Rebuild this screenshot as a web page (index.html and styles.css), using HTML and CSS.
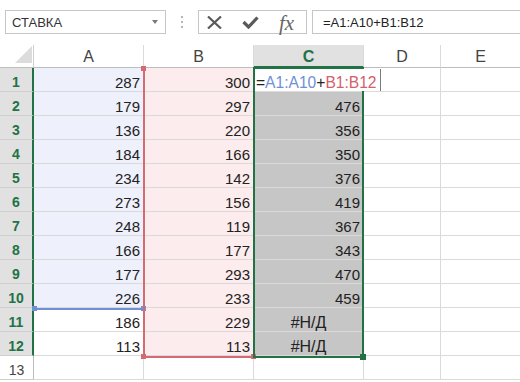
FILE: index.html
```html
<!DOCTYPE html>
<html>

<head>
    <meta charset="utf-8">
    <link rel="stylesheet" href="styles.css">
</head>

<body>
    <div class="formula-bar">
        <div class="name-box">СТАВКА<span class="drop"></span></div>
        <div class="grip"><i></i><i></i><i></i></div>
        <div class="fx-buttons">
            <svg class="ico" width="15" height="13" viewBox="0 0 15 13"><path d="M1 0.5 L14 12.5 M14 0.5 L1 12.5" stroke="#5a5a5a" stroke-width="2.2" fill="none"/></svg>
            <svg class="ico" width="17" height="13" viewBox="0 0 17 13"><path d="M1.5 6 L6.5 11 L15.5 1.5" stroke="#5a5a5a" stroke-width="3.2" fill="none"/></svg>
            <span class="fx">fx</span>
        </div>
        <div class="formula-input">=A1:A10+B1:B12</div>
    </div>

    <div class="sheet">
        <div class="grid">
            <div class="cell corner"></div>
            <div class="cell col-head">A</div>
            <div class="cell col-head">B</div>
            <div class="cell col-head sel">C</div>
            <div class="cell col-head">D</div>
            <div class="cell col-head">E</div>

            <div class="cell row-head sel">1</div>
            <div class="cell num blue">287</div>
            <div class="cell num pink">300</div>
            <div class="cell"></div>
            <div class="cell"></div>
            <div class="cell"></div>

            <div class="cell row-head sel">2</div>
            <div class="cell num blue">179</div>
            <div class="cell num pink">297</div>
            <div class="cell num grey">476</div>
            <div class="cell"></div>
            <div class="cell"></div>

            <div class="cell row-head sel">3</div>
            <div class="cell num blue">136</div>
            <div class="cell num pink">220</div>
            <div class="cell num grey">356</div>
            <div class="cell"></div>
            <div class="cell"></div>

            <div class="cell row-head sel">4</div>
            <div class="cell num blue">184</div>
            <div class="cell num pink">166</div>
            <div class="cell num grey">350</div>
            <div class="cell"></div>
            <div class="cell"></div>

            <div class="cell row-head sel">5</div>
            <div class="cell num blue">234</div>
            <div class="cell num pink">142</div>
            <div class="cell num grey">376</div>
            <div class="cell"></div>
            <div class="cell"></div>

            <div class="cell row-head sel">6</div>
            <div class="cell num blue">273</div>
            <div class="cell num pink">156</div>
            <div class="cell num grey">419</div>
            <div class="cell"></div>
            <div class="cell"></div>

            <div class="cell row-head sel">7</div>
            <div class="cell num blue">248</div>
            <div class="cell num pink">119</div>
            <div class="cell num grey">367</div>
            <div class="cell"></div>
            <div class="cell"></div>

            <div class="cell row-head sel">8</div>
            <div class="cell num blue">166</div>
            <div class="cell num pink">177</div>
            <div class="cell num grey">343</div>
            <div class="cell"></div>
            <div class="cell"></div>

            <div class="cell row-head sel">9</div>
            <div class="cell num blue">177</div>
            <div class="cell num pink">293</div>
            <div class="cell num grey">470</div>
            <div class="cell"></div>
            <div class="cell"></div>

            <div class="cell row-head sel">10</div>
            <div class="cell num blue">226</div>
            <div class="cell num pink">233</div>
            <div class="cell num grey">459</div>
            <div class="cell"></div>
            <div class="cell"></div>

            <div class="cell row-head sel">11</div>
            <div class="cell num">186</div>
            <div class="cell num pink">229</div>
            <div class="cell err grey">#Н/Д</div>
            <div class="cell"></div>
            <div class="cell"></div>

            <div class="cell row-head sel">12</div>
            <div class="cell num">113</div>
            <div class="cell num pink">113</div>
            <div class="cell err grey">#Н/Д</div>
            <div class="cell"></div>
            <div class="cell"></div>

            <div class="cell row-head">13</div>
            <div class="cell"></div>
            <div class="cell"></div>
            <div class="cell"></div>
            <div class="cell"></div>
            <div class="cell"></div>
        </div>

        <!-- range highlights drawn over the grid -->
        <div class="blue-bottom"></div>
        <div class="handle blue-h" style="left: 32px; top: 261px;"></div>
        <div class="handle blue-h" style="left: 141px; top: 261px;"></div>

        <div class="red-left"></div>
        <div class="red-bottom"></div>
        <div class="handle red-h" style="left: 141px; top: 21px;"></div>
        <div class="handle red-h" style="left: 141px; top: 309px;"></div>
        <div class="handle red-h" style="left: 251px; top: 309px;"></div>

        <div class="selection"></div>
        <div class="fill-handle"></div>

        <div class="edit-box">=<span class="ref-a">A1:A10</span>+<span class="ref-b">B1:B12</span></div>
    </div>
</body>

</html>
```

FILE: styles.css
```css
body {
    margin: 0;
    width: 520px;
    height: 382px;
    overflow: hidden;
    background-color: #ffffff;
    font-family: "Liberation Sans", Arial, sans-serif;
    color: #222222;
}

/* formula bar */

.formula-bar {
    display: flex;
    height: 24px;
    padding: 10px 0 0 5px;
}

.name-box {
    box-sizing: border-box;
    width: 161px;
    border: 1px solid #c6c6c6;
    display: flex;
    align-items: center;
    justify-content: space-between;
    padding: 0 7px 0 6px;
    font-size: 13px;
    color: #333333;
}

.drop {
    width: 0;
    height: 0;
    border-left: 3.5px solid transparent;
    border-right: 3.5px solid transparent;
    border-top: 4px solid #7a7a7a;
}

.grip {
    width: 32px;
    display: flex;
    flex-direction: column;
    align-items: center;
    justify-content: center;
    gap: 3px;
}

.grip i {
    width: 2px;
    height: 2px;
    background-color: #b5b5b5;
}

.fx-buttons {
    box-sizing: border-box;
    width: 109px;
    border: 1px solid #c6c6c6;
    display: flex;
    align-items: center;
    gap: 20px;
    padding-left: 8px;
}

.fx {
    font-family: "Liberation Serif", "Times New Roman", serif;
    font-style: italic;
    font-size: 21px;
    color: #666666;
    line-height: 20px;
    margin-top: 1px;
}

.formula-input {
    flex: 1;
    margin-left: 5px;
    border: 1px solid #c6c6c6;
    border-right: none;
    display: flex;
    align-items: center;
    padding-left: 10px;
    font-size: 13px;
    color: #222222;
}

/* sheet */

.sheet {
    position: relative;
    margin-top: 11px;
}

.grid {
    display: grid;
    grid-template-columns: 34px 110px 110px 110px 77px 80px;
    grid-template-rows: 23px;
    grid-auto-rows: 24px;
}

.cell {
    box-sizing: border-box;
    border-right: 1px solid #dadada;
    border-bottom: 1px solid #dadada;
    display: flex;
    align-items: flex-end;
    font-size: 15px;
    line-height: 17px;
    white-space: nowrap;
}

.num {
    justify-content: flex-end;
    padding-right: 3px;
}

.err {
    justify-content: center;
    font-size: 16px;
}

.blue {
    background-color: #eef1fc;
}

.pink {
    background-color: #fdeced;
}

.grey {
    background-color: #c6c6c6;
}

.corner {
    position: relative;
    border-right-color: #cfcfcf;
    border-bottom-color: #bdbdbd;
}

.corner::after {
    content: "";
    position: absolute;
    right: 1px;
    bottom: 4px;
    border-left: 17px solid transparent;
    border-bottom: 17px solid #dcdcdc;
}

.col-head {
    justify-content: center;
    padding-bottom: 2px;
    font-size: 16px;
    color: #444444;
    border-bottom-color: #bdbdbd;
}

.col-head.sel {
    background-color: #e1e1e1;
    color: #217346;
    font-weight: bold;
    border-bottom: 2px solid #217346;
    padding-bottom: 1px;
}

.row-head {
    justify-content: center;
    font-size: 14px;
    color: #444444;
    border-right-color: #bdbdbd;
    border-bottom-color: #cfcfcf;
}

.row-head.sel {
    background-color: #e1e1e1;
    color: #217346;
    font-weight: bold;
    border-right: 2px solid #217346;
}

/* reference highlights */

.blue-bottom {
    position: absolute;
    left: 34px;
    top: 263px;
    width: 109px;
    height: 2px;
    background-color: #6f8fd6;
}

.red-left {
    position: absolute;
    left: 143px;
    top: 23px;
    width: 2px;
    height: 289px;
    background-color: #d46a72;
}

.red-bottom {
    position: absolute;
    left: 143px;
    top: 311px;
    width: 110px;
    height: 2px;
    background-color: #d46a72;
}

.handle {
    position: absolute;
    width: 5px;
    height: 5px;
}

.blue-h {
    background-color: #6f8fd6;
}

.red-h {
    background-color: #d46a72;
}

.selection {
    position: absolute;
    box-sizing: border-box;
    left: 253px;
    top: 22px;
    width: 111px;
    height: 291px;
    border: 2px solid #217346;
}

.fill-handle {
    position: absolute;
    left: 360px;
    top: 309px;
    width: 6px;
    height: 6px;
    background-color: #217346;
}

.edit-box {
    position: absolute;
    box-sizing: border-box;
    left: 255px;
    top: 24px;
    width: 126px;
    height: 22px;
    background-color: #ffffff;
    border-right: 1px solid #7a7a7a;
    display: flex;
    align-items: flex-end;
    padding-left: 1px;
    font-size: 15.6px;
    line-height: 17px;
    white-space: nowrap;
}

.ref-a {
    color: #6f8fd6;
}

.ref-b {
    color: #d4606b;
}
```
